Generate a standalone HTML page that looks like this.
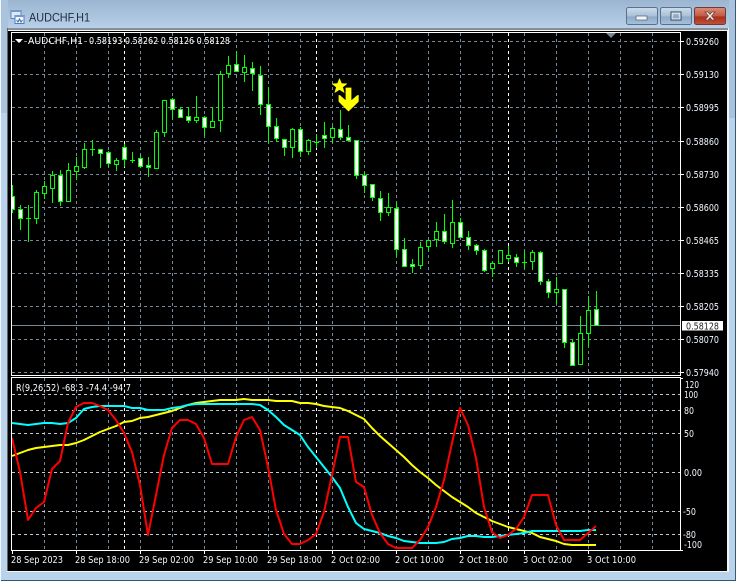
<!DOCTYPE html>
<html><head><meta charset="utf-8"><title>AUDCHF,H1</title>
<style>
html,body{margin:0;padding:0;width:738px;height:581px;overflow:hidden;background:#fff}
svg{display:block;position:absolute;left:0;top:0}
text{font-family:"DejaVu Sans","Liberation Sans",sans-serif}
.a{font-size:10px;fill:#f2f8ff}
.w{font-size:10px;fill:#ffffff}
</style></head><body>
<svg width="738" height="581" viewBox="0 0 738 581" xmlns="http://www.w3.org/2000/svg">
<defs>
<linearGradient id="tb" x1="0" y1="0" x2="0" y2="1"><stop offset="0" stop-color="#9bb4d0"/><stop offset="1" stop-color="#b8d0e9"/></linearGradient>
<linearGradient id="bn" x1="0" y1="0" x2="0" y2="1"><stop offset="0" stop-color="#cddcec"/><stop offset=".5" stop-color="#a9c0d8"/><stop offset=".55" stop-color="#8ea9c6"/><stop offset="1" stop-color="#a8c2dd"/></linearGradient>
<linearGradient id="bc" x1="0" y1="0" x2="0" y2="1"><stop offset="0" stop-color="#d98d7b"/><stop offset=".5" stop-color="#c25a44"/><stop offset=".55" stop-color="#a9301a"/><stop offset="1" stop-color="#c4503a"/></linearGradient>
</defs>
<rect x="1" y="0" width="735" height="581" fill="#b9d3ec"/>
<rect x="1" y="0" width="735" height="28" fill="url(#tb)"/>
<rect x="1" y="0" width="7" height="113" fill="#abc4de"/>
<rect x="729" y="0" width="7" height="118" fill="#a9c3de"/>
<rect x="0" y="0" width="1" height="581" fill="#f4f8fb"/>
<rect x="735" y="0" width="1" height="581" fill="#3b5a70"/>
<rect x="1" y="580" width="735" height="1" fill="#2f5a6a"/>
<rect x="7" y="28" width="722" height="544" fill="#f2f5f8"/>
<rect x="7" y="28" width="721" height="2" fill="#8a8f94"/>
<rect x="7" y="28" width="1" height="543" fill="#5f6366"/>
<rect x="8" y="31" width="719" height="540" fill="#000"/>

<!-- icon -->
<path d="M11 10.500h10v8h-10z" fill="#dfe9f5" stroke="#5b86bb"/>
<rect x="11" y="10" width="10" height="2" fill="#6f9bd0"/>
<path d="M15 15.500h9v8h-9z" fill="#f4f7fb" stroke="#4f7db5"/>
<rect x="15" y="15" width="9" height="2" fill="#6f9bd0"/>
<path d="M16.500 20l1.500 2 1.500-3 1.500 3 1.500-2" fill="none" stroke="#3a6aa8"/>
<text x="29" y="21.500" font-size="12" fill="#1e2c3e" style="font-family:'Liberation Sans',sans-serif" textLength="61" lengthAdjust="spacingAndGlyphs">AUDCHF,H1</text>

<!-- buttons -->
<rect x="626.500" y="7.500" width="31" height="17" rx="2" fill="url(#bn)" stroke="#5a708c"/>
<rect x="636" y="16" width="11" height="4" fill="#f1f5fa" stroke="#4a5f78" stroke-width=".7"/>
<rect x="660.500" y="7.500" width="31" height="17" rx="2" fill="url(#bn)" stroke="#5a708c"/>
<rect x="671" y="12" width="10" height="8" fill="none" stroke="#34485f" stroke-width="1"/>
<rect x="672" y="13" width="8" height="6" fill="none" stroke="#eef3f8" stroke-width="1"/>
<rect x="674" y="14.500" width="4" height="2.500" fill="#8ea9c6"/>
<rect x="694.500" y="7.500" width="31" height="17" rx="2" fill="url(#bc)" stroke="#6e3a35"/>
<path d="M705 12h3l2 2.500 2-2.500h3l-3.500 4 3.500 4h-3l-2-2.500-2 2.500h-3l3.500-4z" fill="#f4f4f4" stroke="#6b3a35" stroke-width=".7"/>

<!-- grid main -->
<g shape-rendering="crispEdges" fill="none">
<path stroke="#778899" stroke-dasharray="3 3" d="M12 41.500H680M12 74.500H680M12 107.500H680M12 141.500H680M12 174.500H680M12 207.500H680M12 240.500H680M12 273.500H680M12 306.500H680M12 339.500H680M12 372.500H680"/>
<path stroke="#778899" stroke-dasharray="3 3" d="M44.500 33V375M76.500 33V375M108.500 33V375M140.500 33V375M172.500 33V375M204.500 33V375M236.500 33V375M268.500 33V375M300.500 33V375M332.500 33V375M364.500 33V375M396.500 33V375M428.500 33V375M460.500 33V375M492.500 33V375M524.500 33V375M556.500 33V375M588.500 33V375M620.500 33V375M652.500 33V375"/>
<path stroke="#ffffff" stroke-dasharray="3 3" d="M124.500 33V375M316.500 33V375M508.500 33V375"/>
<path stroke="#778899" d="M12 325.500H680"/>
<!-- grid sub -->
<path stroke="#778899" stroke-dasharray="3 3" d="M44.500 378V550M76.500 378V550M108.500 378V550M140.500 378V550M172.500 378V550M204.500 378V550M236.500 378V550M268.500 378V550M300.500 378V550M332.500 378V550M364.500 378V550M396.500 378V550M428.500 378V550M460.500 378V550M492.500 378V550M524.500 378V550M556.500 378V550M588.500 378V550M620.500 378V550M652.500 378V550"/>
<path stroke="#ffffff" stroke-dasharray="3 3" d="M124.500 378V550M316.500 378V550M508.500 378V550"/>
<path stroke="#c4cad0" stroke-dasharray="3 3" d="M12 394.500H680M12 410.500H680M12 433.500H680M12 472.500H680M12 511.500H680M12 534.500H680"/>

<!-- wicks -->
<path stroke="#00ff00" d="M12.500 185V213M20.500 205V230M28.500 205V242M36.500 190V224M44.500 181V199M52.500 171V203M60.500 170V206M68.500 163V201M76.500 157V180M84.500 143V169M92.500 140V156M100.500 149V168M108.500 151V167M116.500 158V171M124.500 144V167M132.500 152V163M140.500 155V168M148.500 157V177M156.500 130V168M164.500 100V137M172.500 98V119M180.500 107V117M188.500 107V123M196.500 96V123M204.500 116V136M212.500 107V127M220.500 71V132M228.500 56V78M236.500 51V71M244.500 55V82M252.500 62V91M260.500 66V115M268.500 87V143M276.500 118V142M284.500 139V156M292.500 128V158M300.500 127V157M308.500 139V155M316.500 134V148M324.500 122V148M332.500 126V143M340.500 110V140M348.500 125V140M356.500 140V179M364.500 172V193M372.500 184V201M380.500 191V221M388.500 193V216M396.500 202V257M404.500 238V266M412.500 259V273M420.500 242V269M428.500 240V251M436.500 222V247M444.500 214V244M452.500 200V248M460.500 218V237M468.500 231V250M476.500 244V255M484.500 249V272M492.500 262V277M500.500 250V263M508.500 246V262M516.500 254V267M524.500 251V269M532.500 250V270M540.500 251V285M548.500 279V298M556.500 277V304M564.500 289V348M572.500 339V366M580.500 316V365M588.500 296V347M596.500 291V325M26 218.500h5M90 149.500h5M130 160.500h5M314 142.500h5M522 262.500h5"/>
<!-- white bodies -->
<path stroke="#00ff00" fill="#ffffff" d="M10.500 196.500h4v13h-4zM18.500 209.500h4v9h-4zM58.500 175.500h4v26h-4zM98.500 149.500h4v4h-4zM106.500 152.500h4v11h-4zM122.500 147.500h4v12h-4zM138.500 158.500h4v8h-4zM146.500 165.500h4v2h-4zM170.500 99.500h4v10h-4zM178.500 109.500h4v8h-4zM186.500 116.500h4v4h-4zM202.500 117.500h4v10h-4zM234.500 64.500h4v7h-4zM250.500 68.500h4v5h-4zM258.500 75.500h4v29h-4zM266.500 104.500h4v22h-4zM274.500 126.500h4v12h-4zM282.500 139.500h4v8h-4zM298.500 129.500h4v22h-4zM322.500 135.500h4v3h-4zM338.500 129.500h4v8h-4zM346.500 137.500h4v3h-4zM354.500 140.500h4v35h-4zM362.500 175.500h4v10h-4zM370.500 184.500h4v13h-4zM378.500 198.500h4v14h-4zM394.500 208.500h4v41h-4zM402.500 249.500h4v17h-4zM410.500 264.500h4v2h-4zM442.500 231.500h4v10h-4zM458.500 222.500h4v15h-4zM466.500 237.500h4v8h-4zM474.500 245.500h4v5h-4zM482.500 250.500h4v20h-4zM514.500 257.500h4v5h-4zM538.500 252.500h4v29h-4zM546.500 281.500h4v11h-4zM562.500 289.500h4v53h-4zM570.500 342.500h4v23h-4zM594.500 309.500h4v16h-4z"/>
<!-- hollow bodies -->
<path stroke="#00ff00" fill="#000000" d="M34.500 192.500h4v26h-4zM42.500 186.500h4v7h-4zM50.500 175.500h4v13h-4zM66.500 170.500h4v31h-4zM74.500 166.500h4v5h-4zM82.500 149.500h4v18h-4zM114.500 160.500h4v4h-4zM154.500 132.500h4v36h-4zM162.500 100.500h4v32h-4zM194.500 117.500h4v3h-4zM210.500 121.500h4v6h-4zM218.500 74.500h4v46h-4zM226.500 65.500h4v8h-4zM242.500 67.500h4v5h-4zM290.500 129.500h4v18h-4zM306.500 140.500h4v11h-4zM330.500 128.500h4v9h-4zM386.500 207.500h4v5h-4zM418.500 247.500h4v18h-4zM426.500 240.500h4v6h-4zM434.500 231.500h4v8h-4zM450.500 222.500h4v21h-4zM490.500 263.500h4v5h-4zM498.500 250.500h4v13h-4zM506.500 255.500h4v3h-4zM530.500 252.500h4v9h-4zM554.500 289.500h4v3h-4zM578.500 333.500h4v31h-4zM586.500 310.500h4v23h-4z"/>
<rect x="8" y="31" width="3" height="300" fill="#000"/>
</g>

<!-- star + arrow -->
<path d="M339.500 78.500l2 5 5.500.3-4.300 3.400 1.500 5.400-4.700-3-4.700 3 1.500-5.400-4.300-3.400 5.500-.3z" fill="#ffff00" stroke="#ffff00" stroke-width=".5"/>
<path d="M346 88h5v13l6.500-5.500h.8v6L348.500 111 339 101.500v-6h.8L346 101z" fill="#ffff00" stroke="#ffff00" stroke-width=".8"/>

<!-- sub lines -->
<g fill="none" stroke-width="2" stroke-linejoin="round">
<polyline stroke="#ffff00" points="12,456 20,453 28,450 36,448 44,447 52,446 60,445 68,445 76,443 84,440 92,436 100,432 108,429 116,426 124,422 132,421 140,418 148,417 156,415 164,413 172,411 180,408 188,405 196,403 204,402 212,401 220,400 228,400 236,400 244,399 252,400 260,400 268,400 276,401 284,401 292,401 300,403 308,403 316,404 324,406 332,407 340,408 348,411 356,415 364,419 372,428 380,436 388,443 396,450 404,457 412,465 420,472 428,478 436,485 444,491 452,497 460,502 468,507 476,513 484,517 492,521 500,524 508,527 516,529 524,531 532,533 540,537 548,539 556,541 564,544 572,545 596,545"/>
<polyline stroke="#00ffff" points="12,423 20,424 28,425 36,424 44,423 52,423 60,424 68,423 76,418 84,409 92,407 100,406 108,406 116,406 124,406 132,408 140,408 148,410 156,410 164,410 172,408 180,407 188,405 196,404 204,404 244,404 252,404 260,405 268,410 276,417 284,425 292,430 300,435 308,447 316,457 324,467 332,477 340,488 348,507 356,523 364,529 372,531 380,533 388,536 396,538 404,541 412,542 420,543 428,543 436,543 444,542 452,539 460,538 468,536 476,536 484,537 492,537 500,536 508,535 516,534 524,533 532,531 580,531 588,530 596,530"/>
<polyline stroke="#ff0000" points="12,438 20,472 28,520 36,508 44,502 52,469 60,461 68,423 76,407 84,403 92,403 100,406 108,410 116,420 124,433 132,452 140,485 148,535 156,495 164,455 172,428 180,420 188,420 196,424 204,438 212,464 220,464 228,464 236,437 244,420 252,417 260,430 268,467 276,510 284,534 292,544 300,544 308,540 316,534 324,512 332,475 340,437 348,437 356,482 364,487 372,515 380,533 388,544 396,548 404,548 412,548 420,540 428,527 436,507 444,480 452,443 460,408 468,425 476,458 484,507 492,532 500,538 508,535 516,529 524,517 532,495 540,495 548,495 556,525 564,540 572,540 580,540 588,533 596,526"/>
</g>

<!-- frames -->
<g shape-rendering="crispEdges" fill="none" stroke="#ffffff">
<rect x="11.500" y="32.500" width="669" height="343"/>
<rect x="11.500" y="377.500" width="669" height="173"/>
<path d="M681 41.500h3M681 74.500h3M681 107.500h3M681 141.500h3M681 174.500h3M681 207.500h3M681 240.500h3M681 273.500h3M681 306.500h3M681 339.500h3M681 372.500h3M681 378.500h2M681 550.500h2"/>
<path d="M12.500 551v3M76.500 551v3M140.500 551v3M204.500 551v3M268.500 551v3M332.500 551v3M396.500 551v3M460.500 551v3M524.500 551v3M588.500 551v3"/>
</g>
<path d="M606 33h10l-5 5z" fill="#778899"/>
<path d="M15 39h8l-4 4z" fill="#ffffff"/>

<text class="w" x="28" y="44" textLength="55" lengthAdjust="spacingAndGlyphs">AUDCHF,H1</text>
<text class="w" x="89" y="44" textLength="141" lengthAdjust="spacingAndGlyphs">0.58193 0.58262 0.58126 0.58128</text>
<text class="w" x="16" y="391" textLength="115" lengthAdjust="spacingAndGlyphs">R(9,26,52) -68.3 -74.4 -94.7</text>

<!-- price axis -->
<text class="a" x="686" y="45" textLength="33" lengthAdjust="spacingAndGlyphs">0.59260</text>
<text class="a" x="686" y="78" textLength="33" lengthAdjust="spacingAndGlyphs">0.59130</text>
<text class="a" x="686" y="111" textLength="33" lengthAdjust="spacingAndGlyphs">0.58995</text>
<text class="a" x="686" y="145" textLength="33" lengthAdjust="spacingAndGlyphs">0.58860</text>
<text class="a" x="686" y="178" textLength="33" lengthAdjust="spacingAndGlyphs">0.58730</text>
<text class="a" x="686" y="211" textLength="33" lengthAdjust="spacingAndGlyphs">0.58600</text>
<text class="a" x="686" y="244" textLength="33" lengthAdjust="spacingAndGlyphs">0.58465</text>
<text class="a" x="686" y="277" textLength="33" lengthAdjust="spacingAndGlyphs">0.58335</text>
<text class="a" x="686" y="310" textLength="33" lengthAdjust="spacingAndGlyphs">0.58205</text>
<text class="a" x="686" y="343" textLength="33" lengthAdjust="spacingAndGlyphs">0.58070</text>
<text class="a" x="686" y="376" textLength="33" lengthAdjust="spacingAndGlyphs">0.57940</text>
<rect x="682" y="321" width="41" height="9.500" fill="#ffffff"/>
<text x="686" y="329.500" font-size="10" fill="#222" textLength="33" lengthAdjust="spacingAndGlyphs">0.58128</text>

<!-- indicator axis -->
<text class="a" x="685" y="388" textLength="14" lengthAdjust="spacingAndGlyphs">120</text>
<text class="a" x="684" y="398" textLength="14" lengthAdjust="spacingAndGlyphs">100</text>
<text class="a" x="684" y="414" textLength="10" lengthAdjust="spacingAndGlyphs">80</text>
<text class="a" x="684" y="437" textLength="10" lengthAdjust="spacingAndGlyphs">50</text>
<text class="a" x="684" y="476" textLength="18" lengthAdjust="spacingAndGlyphs">0.00</text>
<text class="a" x="683" y="515" textLength="13" lengthAdjust="spacingAndGlyphs">-50</text>
<text class="a" x="683" y="538" textLength="13" lengthAdjust="spacingAndGlyphs">-80</text>
<text class="a" x="684" y="548" textLength="18" lengthAdjust="spacingAndGlyphs">-100</text>

<!-- time axis -->
<text class="a" x="11" y="563" textLength="52" lengthAdjust="spacingAndGlyphs">28 Sep 2023</text>
<text class="a" x="75" y="563" textLength="55" lengthAdjust="spacingAndGlyphs">28 Sep 18:00</text>
<text class="a" x="139" y="563" textLength="55" lengthAdjust="spacingAndGlyphs">29 Sep 02:00</text>
<text class="a" x="203" y="563" textLength="55" lengthAdjust="spacingAndGlyphs">29 Sep 10:00</text>
<text class="a" x="267" y="563" textLength="55" lengthAdjust="spacingAndGlyphs">29 Sep 18:00</text>
<text class="a" x="331" y="563" textLength="49" lengthAdjust="spacingAndGlyphs">2 Oct 02:00</text>
<text class="a" x="395" y="563" textLength="49" lengthAdjust="spacingAndGlyphs">2 Oct 10:00</text>
<text class="a" x="459" y="563" textLength="49" lengthAdjust="spacingAndGlyphs">2 Oct 18:00</text>
<text class="a" x="523" y="563" textLength="49" lengthAdjust="spacingAndGlyphs">3 Oct 02:00</text>
<text class="a" x="587" y="563" textLength="49" lengthAdjust="spacingAndGlyphs">3 Oct 10:00</text>
</svg>
</body></html>
